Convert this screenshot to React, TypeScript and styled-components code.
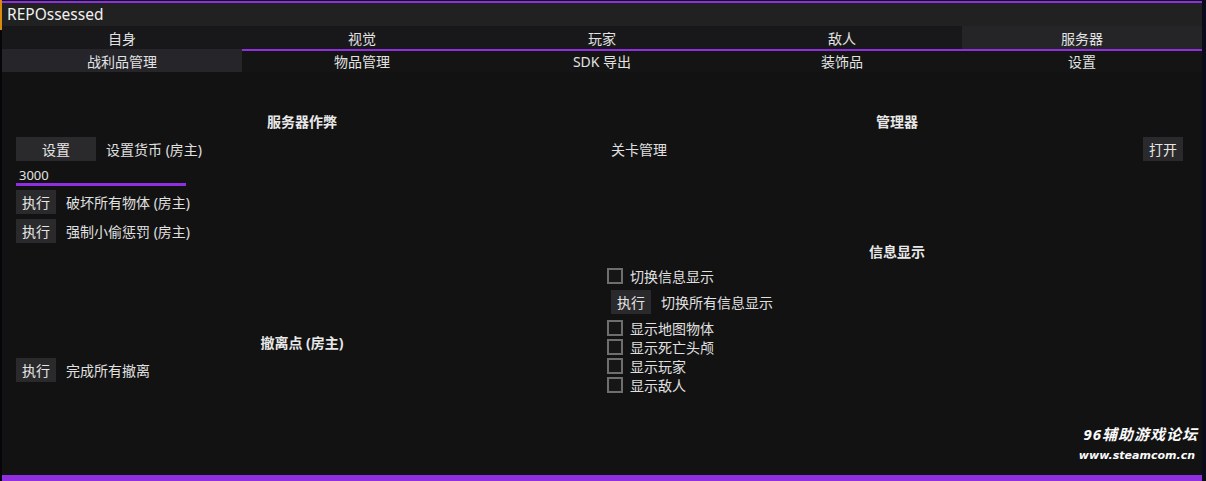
import styled, { createGlobalStyle } from "styled-components";

const purple = "#8f2fe0";

const GlobalStyle = createGlobalStyle`
  *, *::before, *::after {
    box-sizing: border-box;
  }
  html, body {
    margin: 0;
    padding: 0;
  }
  body {
    width: 1206px;
    height: 481px;
    overflow: hidden;
    background:
      linear-gradient(90deg, #d98a12 0 2px, transparent 2px) top left / 100% 30px no-repeat,
      linear-gradient(90deg, #06060a 0 2px, transparent 2px),
      #0b0b1c;
    font-family: "Noto Sans", "Noto Sans CJK SC", sans-serif;
    color: #e2e2e2;
  }
`;

const Window = styled.div`
  margin: 1px 0 0 2px;
  width: 1200px;
  height: 480px;
  display: flex;
  flex-direction: column;
  border-top: 2px solid ${purple};
  background: #121212;
`;

const TitleBar = styled.div`
  height: 23px;
  line-height: 22px;
  padding-left: 5px;
  background: #212121;
  font-size: 15.5px;
  color: #f0f0f0;
`;

const TabRow = styled.div`
  display: grid;
  grid-template-columns: repeat(5, 1fr);
  height: 23px;
  background: #18181a;
`;

const Tab = styled.div<{ $active?: boolean }>`
  display: flex;
  align-items: center;
  justify-content: center;
  font-size: 14px;
  background: ${(p) => (p.$active ? "#252528" : "transparent")};
`;

const SubTabRow = styled.div`
  display: grid;
  grid-template-columns: repeat(5, 1fr);
  height: 23px;
  background: #141414;
`;

const SubTab = styled.div<{ $active?: boolean }>`
  display: flex;
  align-items: center;
  justify-content: center;
  font-size: 14px;
  border-top: 2px solid ${(p) => (p.$active ? "#25252a" : purple)};
  background: ${(p) => (p.$active ? "#25252a" : "transparent")};
  padding-bottom: 1px;
`;

const Content = styled.div`
  position: relative;
  flex: 1;
  display: grid;
  grid-template-columns: 572px 572px;
  column-gap: 23px;
  padding: 40px 0 0 14px;
  background: #121212;
`;

const Column = styled.div`
  display: flex;
  flex-direction: column;
`;

const SectionTitle = styled.div<{ $gap?: number }>`
  height: 20px;
  line-height: 20px;
  text-align: center;
  font-size: 14px;
  font-weight: 700;
  color: #e8e8e8;
  margin-top: ${(p) => p.$gap ?? 0}px;
`;

const Row = styled.div<{ $gap?: number; $spread?: boolean }>`
  display: flex;
  align-items: center;
  justify-content: ${(p) => (p.$spread ? "space-between" : "flex-start")};
  gap: 10px;
  height: 24px;
  margin-top: ${(p) => p.$gap ?? 5}px;
`;

const Button = styled.div<{ $wide?: boolean }>`
  width: ${(p) => (p.$wide ? 80 : 40)}px;
  height: 24px;
  display: flex;
  align-items: center;
  justify-content: center;
  background: #2a2a2c;
  font-size: 14px;
  color: #e6e6e6;
`;

const Label = styled.span`
  font-size: 14px;
  color: #e0e0e0;
`;

const Input = styled.div`
  width: 170px;
  height: 24px;
  margin-top: 1px;
  padding: 4px 0 0 3px;
  line-height: 18px;
  font-size: 13px;
  border-bottom: 3px solid ${purple};
`;

const CheckRow = styled.div<{ $gap?: number }>`
  display: flex;
  align-items: center;
  gap: 7px;
  height: 19px;
  margin: ${(p) => p.$gap ?? 0}px 0 0 -4px;
`;

const Box = styled.div`
  width: 16px;
  height: 16px;
  border: 2px solid #6e6e6e;
  background: #161616;
`;

const BottomBar = styled.div`
  height: 6px;
  background: ${purple};
`;

const Watermark = styled.div`
  position: absolute;
  right: 4px;
  bottom: 8px;
  display: flex;
  flex-direction: column;
  align-items: flex-end;
  font-style: italic;
  font-weight: 700;
  color: #fafafa;
  line-height: 22px;
`;

const MarkTitle = styled.div`
  font-size: 15px;
  letter-spacing: 1px;
`;

const MarkUrl = styled.div`
  font-size: 11px;
  font-family: "DejaVu Sans", sans-serif;
  margin-right: 3px;
`;

const tabs = ["自身", "视觉", "玩家", "敌人", "服务器"];
const subTabs = ["战利品管理", "物品管理", "SDK 导出", "装饰品", "设置"];
const displayToggles = ["显示地图物体", "显示死亡头颅", "显示玩家", "显示敌人"];

export default function App() {
  return (
    <>
      <GlobalStyle />
      <Window>
        <TitleBar>REPOssessed</TitleBar>
        <TabRow>
          {tabs.map((t) => (
            <Tab key={t} $active={t === "服务器"}>
              {t}
            </Tab>
          ))}
        </TabRow>
        <SubTabRow>
          {subTabs.map((t, i) => (
            <SubTab key={t} $active={i === 0}>
              {t}
            </SubTab>
          ))}
        </SubTabRow>
        <Content>
          <Column>
            <SectionTitle>服务器作弊</SectionTitle>
            <Row>
              <Button $wide>设置</Button>
              <Label>设置货币 (房主)</Label>
            </Row>
            <Input>3000</Input>
            <Row $gap={4}>
              <Button>执行</Button>
              <Label>破坏所有物体 (房主)</Label>
            </Row>
            <Row>
              <Button>执行</Button>
              <Label>强制小偷惩罚 (房主)</Label>
            </Row>
            <SectionTitle $gap={90}>撤离点 (房主)</SectionTitle>
            <Row>
              <Button>执行</Button>
              <Label>完成所有撤离</Label>
            </Row>
          </Column>
          <Column>
            <SectionTitle>管理器</SectionTitle>
            <Row $spread>
              <Label>关卡管理</Label>
              <Button>打开</Button>
            </Row>
            <SectionTitle $gap={81}>信息显示</SectionTitle>
            <CheckRow $gap={4}>
              <Box />
              <Label>切换信息显示</Label>
            </CheckRow>
            <Row $gap={5}>
              <Button>执行</Button>
              <Label>切换所有信息显示</Label>
            </Row>
            {displayToggles.map((t, i) => (
              <CheckRow key={t} $gap={i === 0 ? 4 : 0}>
                <Box />
                <Label>{t}</Label>
              </CheckRow>
            ))}
          </Column>
          <Watermark>
            <MarkTitle>96辅助游戏论坛</MarkTitle>
            <MarkUrl>www.steamcom.cn</MarkUrl>
          </Watermark>
        </Content>
        <BottomBar />
      </Window>
    </>
  );
}
